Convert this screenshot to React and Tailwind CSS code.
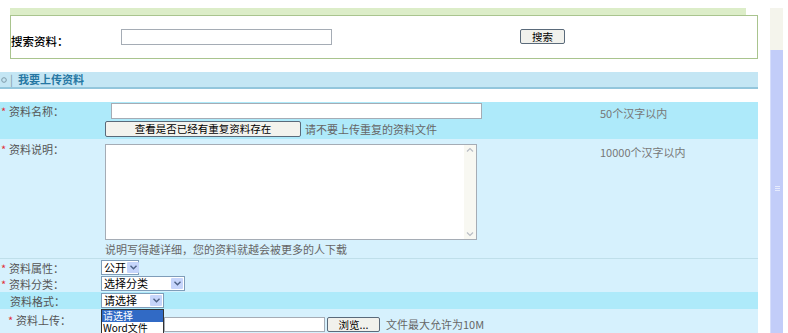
import React from 'react';

function Chevron({ color = '#4d6185' }) {
  return (
    <svg width="7" height="5" viewBox="0 0 7 5">
      <path d="M0.5 0.8 L3.5 3.8 L6.5 0.8" fill="none" stroke={color} strokeWidth="1.4" />
    </svg>
  );
}

function Select({ className, label }) {
  return (
    <div className={`flex h-[15px] border border-[#7f9db9] bg-white ${className}`}>
      <span className="flex-1 whitespace-nowrap pl-[2px] text-[11px] leading-[13px] text-black">{label}</span>
      <span className="m-[1px] flex w-[12px] shrink-0 items-center justify-center rounded-[1px] bg-[#c6d5fb]">
        <Chevron />
      </span>
    </div>
  );
}

function Label({ star = true, children, className = '' }) {
  return (
    <div className={`flex text-[11px] leading-[14px] text-[#555] ${className}`}>
      <span className="w-[9px] pl-[1px] text-[#e0303a]">{star ? '*' : ''}</span>
      <span className="whitespace-nowrap">{children}</span>
    </div>
  );
}

export default function App() {
  return (
    <div className="flex h-[333px] w-[788px] overflow-hidden bg-white font-['Noto_Sans_CJK_SC','Noto_Sans',sans-serif]">
      <div className="flex w-[758px] flex-col pt-[8px]">
        <div className="ml-[10px] mr-[12px] h-[7px] bg-[#dcedc8]" />
        <div className="ml-[10px] flex h-[45px] items-center border border-[#a9c48e]">
          <span className="w-[110px] pt-[9px] text-[11.5px] font-medium text-black">搜索资料：</span>
          <div className="h-[16px] w-[211px] border border-[#a5acb5] bg-white" />
          <button className="ml-[188px] h-[15px] w-[45px] rounded-[2px] border border-[#5a6a7a] bg-[#f1f1ec] text-[10.5px] leading-[13px] text-black">
            搜索
          </button>
        </div>

        <div className="mt-[13px] flex h-[17px] items-center border-b-2 border-[#93c6dc] bg-[#c4e6f4] text-[11px] font-bold text-[#2677a3]">
          <svg width="6" height="6" viewBox="0 0 6 6" className="ml-[1px]">
            <circle cx="3" cy="3" r="2.3" fill="none" stroke="#7f9aa8" strokeWidth="1" />
          </svg>
          <span className="ml-[3px] font-normal text-[#7f9aa8]">|</span>
          <span className="ml-[5px]">我要上传资料</span>
        </div>

        <div className="mt-[13px] flex flex-col">
          {/* 资料名称 */}
          <div className="flex h-[37px] bg-[#aeeafa]">
            <Label className="w-[105px] pt-[2px]">资料名称：</Label>
            <div className="flex w-[495px] flex-col pt-[1px]">
              <div className="ml-[6px] h-[16px] w-[371px] border border-[#a5acb5] bg-white" />
              <div className="mt-[2px] flex items-center">
                <button className="h-[16px] w-[196px] rounded-[2px] border border-[#5a6a7a] bg-[#f3f3ee] text-[10.5px] leading-[14px] text-black">
                  查看是否已经有重复资料存在
                </button>
                <span className="ml-[4px] text-[11px] text-[#666]">请不要上传重复的资料文件</span>
              </div>
            </div>
            <div className="pt-[3px] text-[11px] text-[#777]">50个汉字以内</div>
          </div>

          {/* 资料说明 */}
          <div className="flex h-[120px] border-b border-[#bfdfea] bg-[#d6f1fd]">
            <Label className="w-[105px] pt-[3px]">资料说明：</Label>
            <div className="flex w-[495px] flex-col pt-[5px]">
              <div className="flex h-[96px] w-[372px] border border-[#a5acb5] bg-white">
                <div className="flex-1" />
                <div className="flex w-[12px] flex-col items-center justify-between bg-[#f8f8f2] py-[2px]">
                  <svg width="8" height="6" viewBox="0 0 8 6">
                    <path d="M1 4.5 L4 1.5 L7 4.5" fill="none" stroke="#b9bdc4" strokeWidth="1.2" />
                  </svg>
                  <svg width="8" height="6" viewBox="0 0 8 6">
                    <path d="M1 1.5 L4 4.5 L7 1.5" fill="none" stroke="#b9bdc4" strokeWidth="1.2" />
                  </svg>
                </div>
              </div>
              <div className="mt-[1px] text-[11px] text-[#666]">说明写得越详细，您的资料就越会被更多的人下载</div>
            </div>
            <div className="pt-[5px] text-[11px] text-[#777]">10000个汉字以内</div>
          </div>

          {/* 资料属性 */}
          <div className="flex h-[16px] items-center bg-[#d6f1fd] pt-[1px]">
            <Label className="w-[101px]">资料属性：</Label>
            <Select className="w-[38px]" label="公开" />
          </div>

          {/* 资料分类 */}
          <div className="flex h-[17px] items-center bg-[#d6f1fd]">
            <Label className="w-[101px]">资料分类：</Label>
            <Select className="w-[84px]" label="选择分类" />
          </div>

          {/* 资料格式 */}
          <div className="flex h-[17px] items-center bg-[#aeeafa]">
            <Label star={false} className="w-[101px] pl-[1px]">资料格式：</Label>
            <Select className="w-[63px]" label="请选择" />
          </div>

          {/* 资料上传 */}
          <div className="relative flex h-[24px] items-end bg-[#d6f1fd] pb-[1px]">
            <Label className="w-[164px] self-start pl-[7px] pt-[4px]">资料上传：</Label>
            <div className="h-[15px] w-[161px] border border-[#a5acb5] bg-white" />
            <button className="ml-[2px] h-[15px] w-[53px] rounded-[2px] border border-[#5a6a7a] bg-[#f1f1ec] text-[10.5px] leading-[13px] text-black">
              浏览...
            </button>
            <span className="ml-[6px] text-[11px] leading-[15px] text-[#666]">文件最大允许为10M</span>

            <div className="absolute left-[101px] top-0 w-[63px] border border-[#333] bg-white text-[10px]">
              <div className="h-[12px] bg-[#316ac5] pl-[1px] leading-[12px] text-white">请选择</div>
              <div className="h-[12px] pl-[1px] leading-[12px] text-black">Word文件</div>
            </div>
          </div>
        </div>
      </div>

      {/* scrollbar */}
      <div className="ml-[12px] flex w-[13px] flex-col pt-[8px]">
        <div className="h-[42px] bg-[#f4f4ec]" />
        <div className="flex flex-1 flex-col items-center border-l border-[#d6defb] bg-[#c2cdf9] pt-[136px]">
          <div className="h-[1px] w-[5px] bg-[#e6ebfd]" />
          <div className="mt-[1px] h-[1px] w-[5px] bg-[#e6ebfd]" />
          <div className="mt-[1px] h-[1px] w-[5px] bg-[#e6ebfd]" />
        </div>
      </div>
    </div>
  );
}
